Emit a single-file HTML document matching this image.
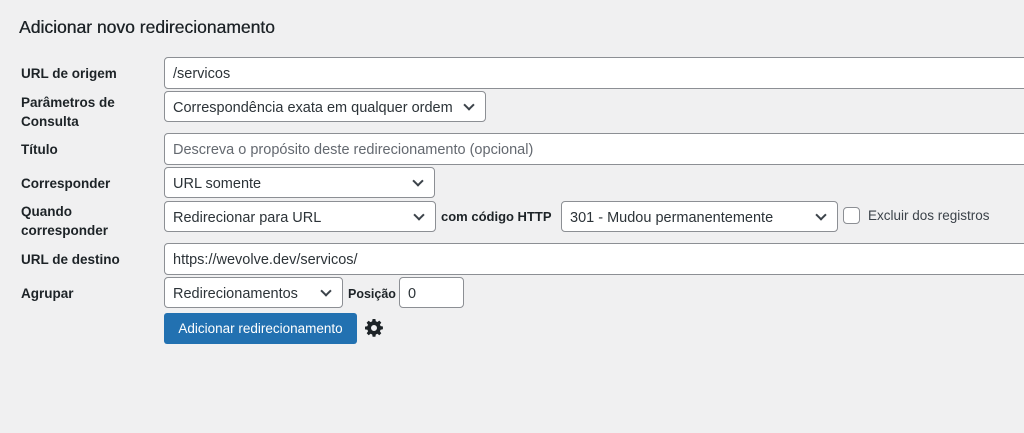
<!DOCTYPE html>
<html><head><style>
body{margin:0;width:1024px;height:433px;background:#f0f0f1;font-family:"Liberation Sans",sans-serif;color:#1d2327;position:relative;overflow:hidden}
.a{position:absolute}
h1{position:absolute;left:19px;top:17px;margin:0;font-size:17.5px;font-weight:normal;color:#1d2327;text-shadow:0.3px 0 0 #1d2327}
.l{position:absolute;left:21px;font-size:13.5px;font-weight:bold;line-height:19px}
.f{position:absolute;background:#fff;border:1px solid #8c8f94;border-radius:4px;box-sizing:border-box;font-size:14.5px;padding:2px 0 0 8px;color:#2c3338;white-space:nowrap;overflow:hidden;display:flex;align-items:center}
.s::after{content:"";position:absolute;right:12px;top:9px;width:6px;height:6px;border-right:2px solid #3c434a;border-bottom:2px solid #3c434a;transform:rotate(45deg)}
.t{position:absolute;font-size:13px;font-weight:bold;line-height:18px}
</style></head><body>
<h1>Adicionar novo redirecionamento</h1>
<div class="l" style="top:64px">URL de origem</div>
<div class="l" style="top:93px">Parâmetros de<br>Consulta</div>
<div class="l" style="top:140px">Título</div>
<div class="l" style="top:174px">Corresponder</div>
<div class="l" style="top:202px">Quando<br>corresponder</div>
<div class="l" style="top:250px">URL de destino</div>
<div class="l" style="top:284px">Agrupar</div>

<div class="f" style="left:164px;top:57px;width:880px;height:32px">/servicos</div>
<div class="f s" style="left:164px;top:91px;width:322px;height:31px">Correspondência exata em qualquer ordem</div>
<div class="f" style="left:164px;top:133px;width:880px;height:32px;color:#646970">Descreva o propósito deste redirecionamento (opcional)</div>
<div class="f s" style="left:164px;top:167px;width:271px;height:31px">URL somente</div>
<div class="f s" style="left:164px;top:201px;width:272px;height:31px">Redirecionar para URL</div>
<div class="t" style="left:441px;top:208px">com código HTTP</div>
<div class="f s" style="left:561px;top:201px;width:277px;height:31px">301 - Mudou permanentemente</div>
<div class="a" style="left:843px;top:207px;width:17px;height:17px;border:1px solid #8c8f94;border-radius:4px;background:#fff;box-sizing:border-box"></div>
<div class="a" style="left:868px;top:208px;font-size:13.5px;color:#3c434a">Excluir dos registros</div>
<div class="f" style="left:164px;top:243px;width:880px;height:32px">https://wevolve.dev/servicos/</div>
<div class="f s" style="left:164px;top:277px;width:179px;height:31px">Redirecionamentos</div>
<div class="t" style="left:348px;top:285px;font-size:12.5px">Posição</div>
<div class="f" style="left:399px;top:277px;width:65px;height:31px">0</div>
<div class="a" style="left:164px;top:313px;width:193px;height:31px;background:#2271b1;border-radius:3px;color:#fff;font-size:13.5px;line-height:31px;text-align:center">Adicionar redirecionamento</div>
<svg class="a" style="left:364px;top:318px" width="20" height="20" viewBox="0 0 20 20"><path fill="#1d2327" d="M8.6 1h2.8l.4 2.3 1.6.7 1.900-1.4 2 2-1.4 1.9.7 1.6 2.3.4v2.8l-2.3.4-.7 1.6 1.4 1.9-2 2-1.9-1.4-1.6.7-.4 2.3H8.6l-.4-2.3-1.6-.7-1.9 1.4-2-2 1.4-1.9-.7-1.6L1 11.4V8.6l2.3-.4.7-1.6-1.4-1.9 2-2 1.9 1.4 1.6-.7zM10 7a3 3 0 100 6 3 3 0 000-6z"/></svg>
</body></html>
